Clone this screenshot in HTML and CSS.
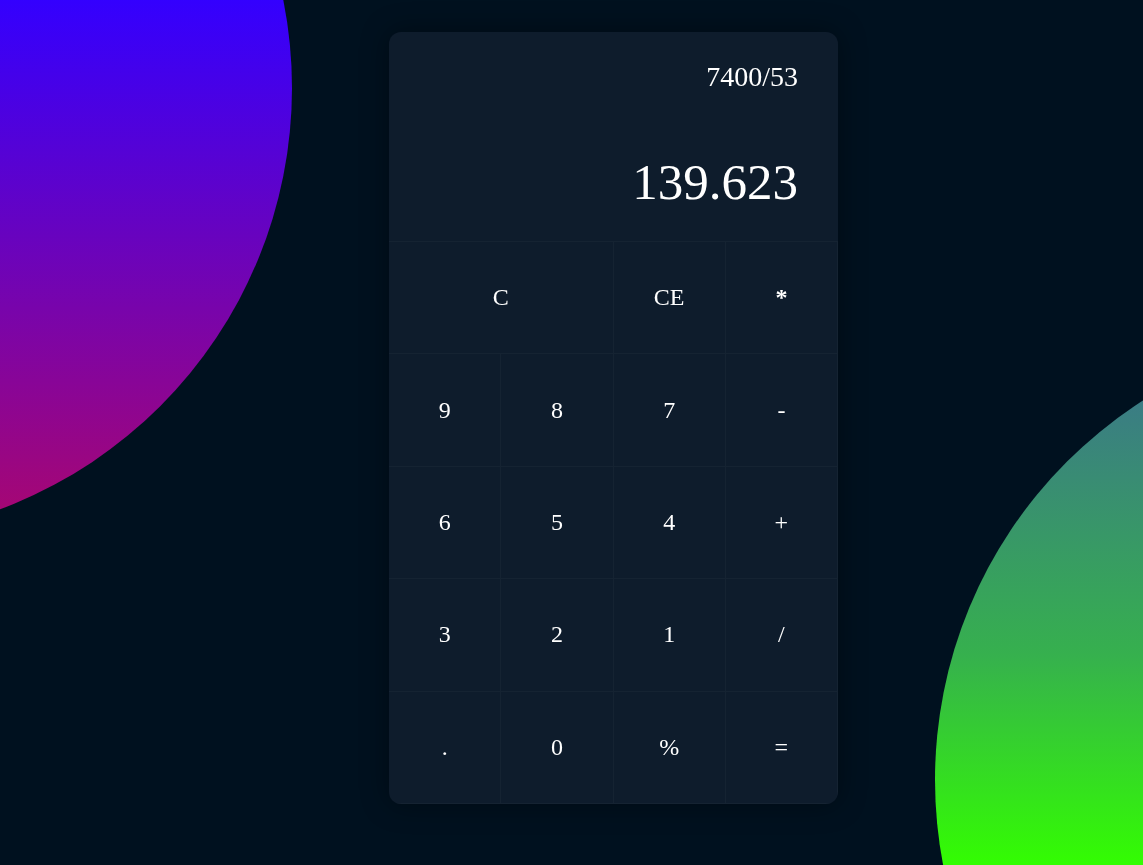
FILE: index.html
```html
<!DOCTYPE html>
<html lang="en">
<head>
<meta charset="utf-8">
<title>Calculator</title>
<link rel="stylesheet" href="styles.css">
</head>
<body>
<div class="backdrop">
  <div class="blob blob-left"></div>
  <div class="blob blob-right"></div>
</div>
<main class="stage">
  <section class="calc">
    <div class="display">
      <div class="expr">7400/53</div>
      <div class="result">139.623</div>
    </div>
    <div class="keys">
      <button class="key span2">C</button>
      <button class="key">CE</button>
      <button class="key star">*</button>
      <button class="key">9</button>
      <button class="key">8</button>
      <button class="key">7</button>
      <button class="key">-</button>
      <button class="key">6</button>
      <button class="key">5</button>
      <button class="key">4</button>
      <button class="key">+</button>
      <button class="key">3</button>
      <button class="key">2</button>
      <button class="key">1</button>
      <button class="key">/</button>
      <button class="key">.</button>
      <button class="key">0</button>
      <button class="key">%</button>
      <button class="key">=</button>
    </div>
  </section>
</main>
</body>
</html>
```
FILE: styles.css
```css
* { box-sizing: border-box; }
html, body {
  margin: 0;
  height: 100%;
}
body {
  background: #00111f;
  overflow: hidden;
  font-family: "Liberation Serif", "Times New Roman", serif;
  color: #ffffff;
}
.backdrop {
  position: fixed;
  inset: 0;
  overflow: hidden;
  z-index: 0;
}
.blob {
  position: absolute;
  width: 900px;
  height: 900px;
  border-radius: 50%;
}
.blob-left {
  left: -608px;
  top: -362px;
  background: linear-gradient(180deg, #3300ff 40%, #ab076d 100%);
}
.blob-right {
  left: 935px;
  top: 330px;
  background: linear-gradient(180deg, #3e6f98 0%, #3a8080 10%, #36b04e 36%, #33ff00 60%);
}
.stage {
  position: relative;
  z-index: 1;
  padding: 32px 0 0 389px;
}
.calc {
  width: 449px;
  height: 772px;
  background: #0e1c2c;
  border-radius: 12px;
  box-shadow: 0 0 28px rgba(0, 0, 0, 0.4);
  display: flex;
  flex-direction: column;
  overflow: hidden;
}
.display {
  height: 209px;
  padding: 31px 40px 0 40px;
  display: flex;
  flex-direction: column;
  align-items: flex-end;
}
.expr {
  font-size: 28px;
  line-height: 28px;
}
.result {
  margin-top: 65px;
  font-size: 51px;
  line-height: 52px;
}
.keys {
  flex: 1;
  display: grid;
  grid-template-columns: repeat(4, 1fr);
  grid-template-rows: repeat(5, 1fr);
  border-top: 1px solid rgba(255, 255, 255, 0.03);
}
.key {
  background: transparent;
  border: none;
  border-right: 1px solid rgba(255, 255, 255, 0.03);
  border-bottom: 1px solid rgba(255, 255, 255, 0.03);
  color: #ffffff;
  font-family: "Liberation Serif", "Times New Roman", serif;
  font-size: 24px;
  padding: 0;
  cursor: pointer;
}
.star { font-weight: 700; }
.span2 { grid-column: span 2; }
```
